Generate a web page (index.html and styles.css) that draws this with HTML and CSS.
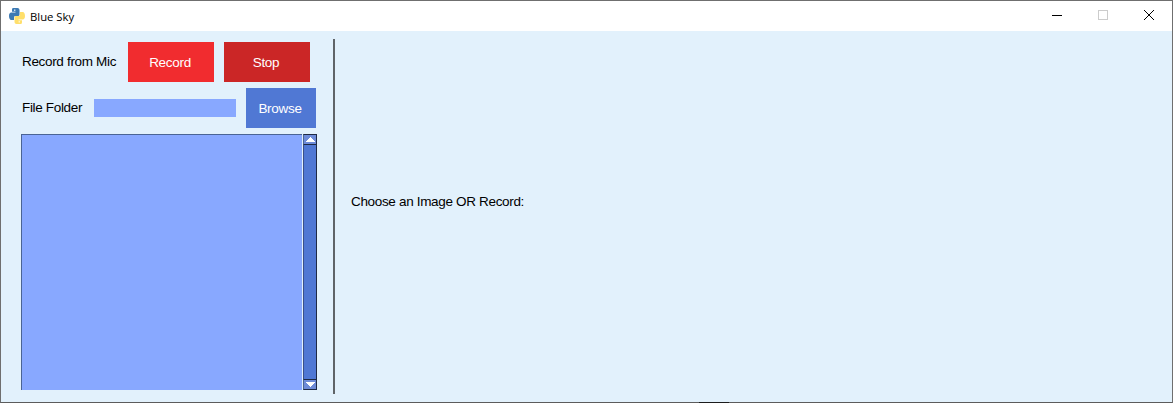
FILE: index.html
```html
<!DOCTYPE html>
<html lang="en">
<head>
<meta charset="utf-8">
<title>Blue Sky</title>
<link rel="stylesheet" href="styles.css">
</head>
<body>
<div class="window">
  <header class="titlebar">
    <svg class="app-icon" width="16" height="16" viewBox="0 0 16 16">
      <path fill="#3d7ab3" d="M4 0h4.500C10 0 10.500 1 10.500 2.500v4c0 1-.7 1.500-1.500 1.500H6.500C5.500 8 5 8.700 5 9.700V12H2.300C.8 12 0 10 0 8c0-2 .8-3.500 2.300-3.500H6.500V3.800H3V2C3 .8 3.300 0 4 0z"/>
      <path fill="#ffdf6b" d="M12 16H7.500C6 16 5.500 15 5.500 13.500v-4c0-1 .7-1.500 1.500-1.500h2.500c1 0 1.500-.7 1.500-1.700V4h2.700C15.200 4 16 6 16 8c0 2-.8 3.500-2.300 3.500H9.500v.7H13V14c0 1.200-.3 2-1 2z"/>
      <rect x="5" y="1.500" width="1.400" height="1.400" fill="#dfeaf4"/>
      <rect x="9.600" y="13.100" width="1.400" height="1.400" fill="#fff6d0"/>
    </svg>
    <span class="title-text">Blue Sky</span>
    <div class="controls">
      <span class="control"><svg width="10" height="10" viewBox="0 0 10 10"><path d="M0 5.500h10" stroke="#000" fill="none"/></svg></span>
      <span class="control"><svg width="10" height="10" viewBox="0 0 10 10"><rect x=".5" y=".5" width="9" height="9" stroke="#ccc" fill="none"/></svg></span>
      <span class="control"><svg width="10" height="10" viewBox="0 0 10 10"><path d="M0 0l10 10M10 0L0 10" stroke="#000" fill="none"/></svg></span>
    </div>
  </header>
  <main class="client">
    <section class="left">
      <div class="row-record">
        <span class="label label-mic">Record from Mic</span>
        <button class="btn btn-record">Record</button>
        <button class="btn btn-stop">Stop</button>
      </div>
      <div class="row-file">
        <span class="label label-folder">File Folder</span>
        <div class="entry"></div>
        <button class="btn btn-browse">Browse</button>
      </div>
      <div class="listwrap">
        <div class="listbox"></div>
        <div class="scrollbar">
          <div class="arrow arrow-up"><svg width="9" height="5" viewBox="0 0 9 5" shape-rendering="crispEdges"><path d="M4 0h1v1h1v1h1v1h1v1h1v1H0V4h1V3h1V2h1V1h1z" fill="#fff"/></svg></div>
          <div class="trough"></div>
          <div class="arrow arrow-down"><svg width="9" height="5" viewBox="0 0 9 5" shape-rendering="crispEdges"><path d="M4 5h1V4h1V3h1V2h1V1h1V0H0v1h1v1h1v1h1v1h1z" fill="#fff"/></svg></div>
        </div>
      </div>
    </section>
    <div class="divider"></div>
    <section class="right">
      <span class="label">Choose an Image OR Record:</span>
    </section>
  </main>
  <div class="edge-mark"></div>
</div>
</body>
</html>
```

FILE: styles.css
```css
* { box-sizing: border-box; }
html, body { margin: 0; height: 100%; }
body { overflow: hidden; }
.window {
  position: relative;
  width: 1173px;
  height: 403px;
  border: 1px solid #6f6f6f;
  border-bottom-color: #5c5c5c;
  display: flex;
  flex-direction: column;
  background: #e2f1fc;
  font-family: "Liberation Sans", Arial, sans-serif;
}
.edge-mark {
  position: absolute;
  left: 698px;
  bottom: -1px;
  width: 30px;
  height: 1px;
  background: #1c1c1c;
}
.titlebar {
  height: 30px;
  flex: none;
  background: #fff;
  display: flex;
  align-items: center;
  padding-left: 8px;
}
.app-icon { flex: none; }
.title-text {
  margin-left: 5px;
  font: 11.3px "Open Sans", sans-serif;
  color: #000;
}
.controls { margin-left: auto; display: flex; align-self: flex-start; }
.control {
  width: 46px;
  height: 28px;
  display: flex;
  align-items: center;
  justify-content: center;
}
.client { flex: 1; display: flex; min-height: 0; padding-top: 8px; padding-bottom: 8px; }
.left { width: 332px; flex: none; padding: 3px 0 0 20px; display: flex; flex-direction: column; }
.divider { width: 2px; flex: none; background: #5f6468; }
.right { flex: 1; padding: 153px 0 0 16px; }
.label { font-size: 13.5px; letter-spacing: -0.33px; color: #000; line-height: 16px; }
.row-record { display: flex; align-items: center; height: 40px; padding-left: 1px; }
.label-mic { width: 106px; }
.btn {
  border: 0;
  padding: 0 2px 0 0;
  height: 40px;
  color: #fff;
  font: 13.5px "Liberation Sans", Arial, sans-serif;
  letter-spacing: -0.3px;
}
.btn-record { width: 86px; background: #f12c2f; margin-right: 10px; }
.btn-stop { width: 86px; background: #cb2626; }
.row-file { display: flex; align-items: center; height: 40px; margin-top: 6px; padding-left: 1px; }
.label-folder { width: 72px; }
.entry { width: 142px; height: 18px; background: #88a8ff; margin-right: 10px; }
.btn-browse { width: 70px; background: #5078d4; }
.listwrap { display: flex; margin-top: 6px; height: 256px; }
.listbox { width: 281px; background: #88a8ff; border: 1px solid #4a6494; border-right: 0; border-bottom: 0; }
.scrollbar {
  width: 15px;
  display: flex;
  flex-direction: column;
  background: #5078d4;
  border-left: 1px solid #e2f1fc;
}
.arrow {
  height: 11px;
  flex: none;
  display: flex;
  align-items: center;
  justify-content: center;
  background: #6d8bd8;
  border: 1px solid #1f2a44;
  border-left-color: #4a6494;
}
.arrow svg { display: block; }
.trough { flex: 1; background: #5078d4; border-right: 1px solid #1f2a44; border-left: 1px solid #3a4f88; }
```
